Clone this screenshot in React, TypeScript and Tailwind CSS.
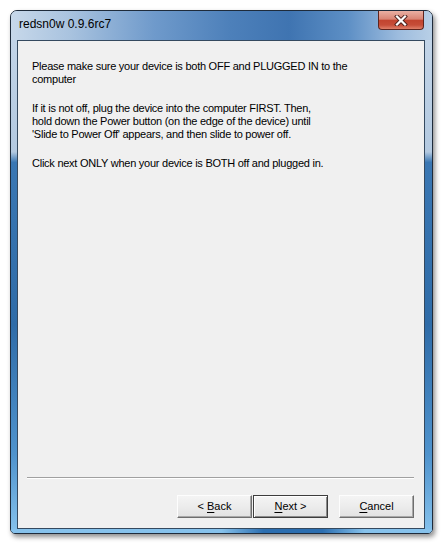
import React from "react";

const FONT = { fontFamily: '"Liberation Sans", Arial, sans-serif' };

function WizButton({
  label,
  isDefault,
}: {
  label: [string, string, string];
  isDefault?: boolean;
}) {
  const [pre, key, post] = label;
  return (
    <button
      className={`w-[75px] h-[23px] text-[11px] text-black leading-none ${
        isDefault
          ? "border border-[#3d3d3d] shadow-[inset_1px_1px_0_#ffffff,inset_-1px_-1px_0_#8a8a8a]"
          : "border border-t-[#fdfdfd] border-l-[#fdfdfd] border-r-[#6e6e6e] border-b-[#6e6e6e] shadow-[inset_-1px_-1px_0_#a8a8a8]"
      } bg-[linear-gradient(to_bottom,#f4f4f4_0%,#ececec_50%,#e2e2e2_100%)]`}
      style={FONT}
    >
      {pre}
      <span className="underline underline-offset-2">{key}</span>
      {post}
    </button>
  );
}

export default function App() {
  return (
    <div className="w-[443px] h-[547px] bg-white pt-[10px] pl-[10px]">
      {/* window frame */}
      <div className="w-[423px] h-[524px] flex flex-col rounded-t-[7px] rounded-b-[5px] border border-[#1e2b3b] overflow-hidden shadow-[2px_3px_5px_rgba(0,0,0,0.45)] bg-[linear-gradient(to_bottom,#c6d7e9_0%,#b3c9e0_27%,#3a77b3_29%,#2f6ca8_60%,#4f93cd_85%,#86c2ec_100%)]">
        {/* title bar */}
        <div className="h-[29px] flex items-start justify-between bg-[linear-gradient(to_right,#c7d8ea_0%,#a9c3df_14%,#6f9acb_34%,#4d80ba_52%,#3f74b1_66%,#5d8fc5_80%,#9dbcde_92%,#b8cfe6_100%)]">
          <span className="pl-[8px] pt-[7px] text-[12px] text-black leading-none" style={FONT}>
            redsn0w 0.9.6rc7
          </span>
          <div className="mr-[8px] w-[46px] h-[19px] flex items-center justify-center rounded-b-[4px] border border-t-0 border-[#5e241d] bg-[linear-gradient(to_bottom,#eab0a3_0%,#d98474_45%,#c2442f_52%,#c64d38_78%,#e0806a_100%)]">
            <svg width="14" height="11" viewBox="0 0 14 11">
              <path d="M3 1.5 L11 9.5 M11 1.5 L3 9.5" stroke="#4a1f1a" strokeWidth="4" strokeLinecap="square" />
              <path d="M3 1.5 L11 9.5 M11 1.5 L3 9.5" stroke="#ffffff" strokeWidth="2.2" strokeLinecap="square" />
            </svg>
          </div>
        </div>

        {/* client area */}
        <div className="ml-[6px] mr-[7px] flex-1 flex flex-col border border-[#34495f] bg-[#f0f0f0]">
          <div
            className="pl-[14px] pt-[19px] text-[11px] tracking-[-0.25px] leading-[13px] text-black flex flex-col gap-[16px]"
            style={FONT}
          >
            <p>
              Please make sure your device is both OFF and PLUGGED IN to the
              <br />
              computer
            </p>
            <p>
              If it is not off, plug the device into the computer FIRST. Then,
              <br />
              hold down the Power button (on the edge of the device) until
              <br />
              'Slide to Power Off' appears, and then slide to power off.
            </p>
            <p>Click next ONLY when your device is BOTH off and plugged in.</p>
          </div>

          <div className="flex-1" />

          {/* etched separator */}
          <div className="ml-[9px] mr-[10px] border-t border-t-[#a0a0a0] border-b border-b-white" />

          <div className="flex justify-end pt-[16px] pb-[10px] pr-[10px]">
            <WizButton label={["< ", "B", "ack"]} />
            <div className="w-[1px]" />
            <WizButton label={["", "N", "ext >"]} isDefault />
            <div className="w-[11px]" />
            <WizButton label={["", "C", "ancel"]} />
          </div>
        </div>

        {/* bottom frame strip */}
        <div className="h-[4px] bg-[linear-gradient(to_right,#86c2ec_0%,#86c2ec_50%,#2b6eb0_60%,#2b6eb0_74%,#86c2ec_84%,#86c2ec_100%)]" />
      </div>
    </div>
  );
}
